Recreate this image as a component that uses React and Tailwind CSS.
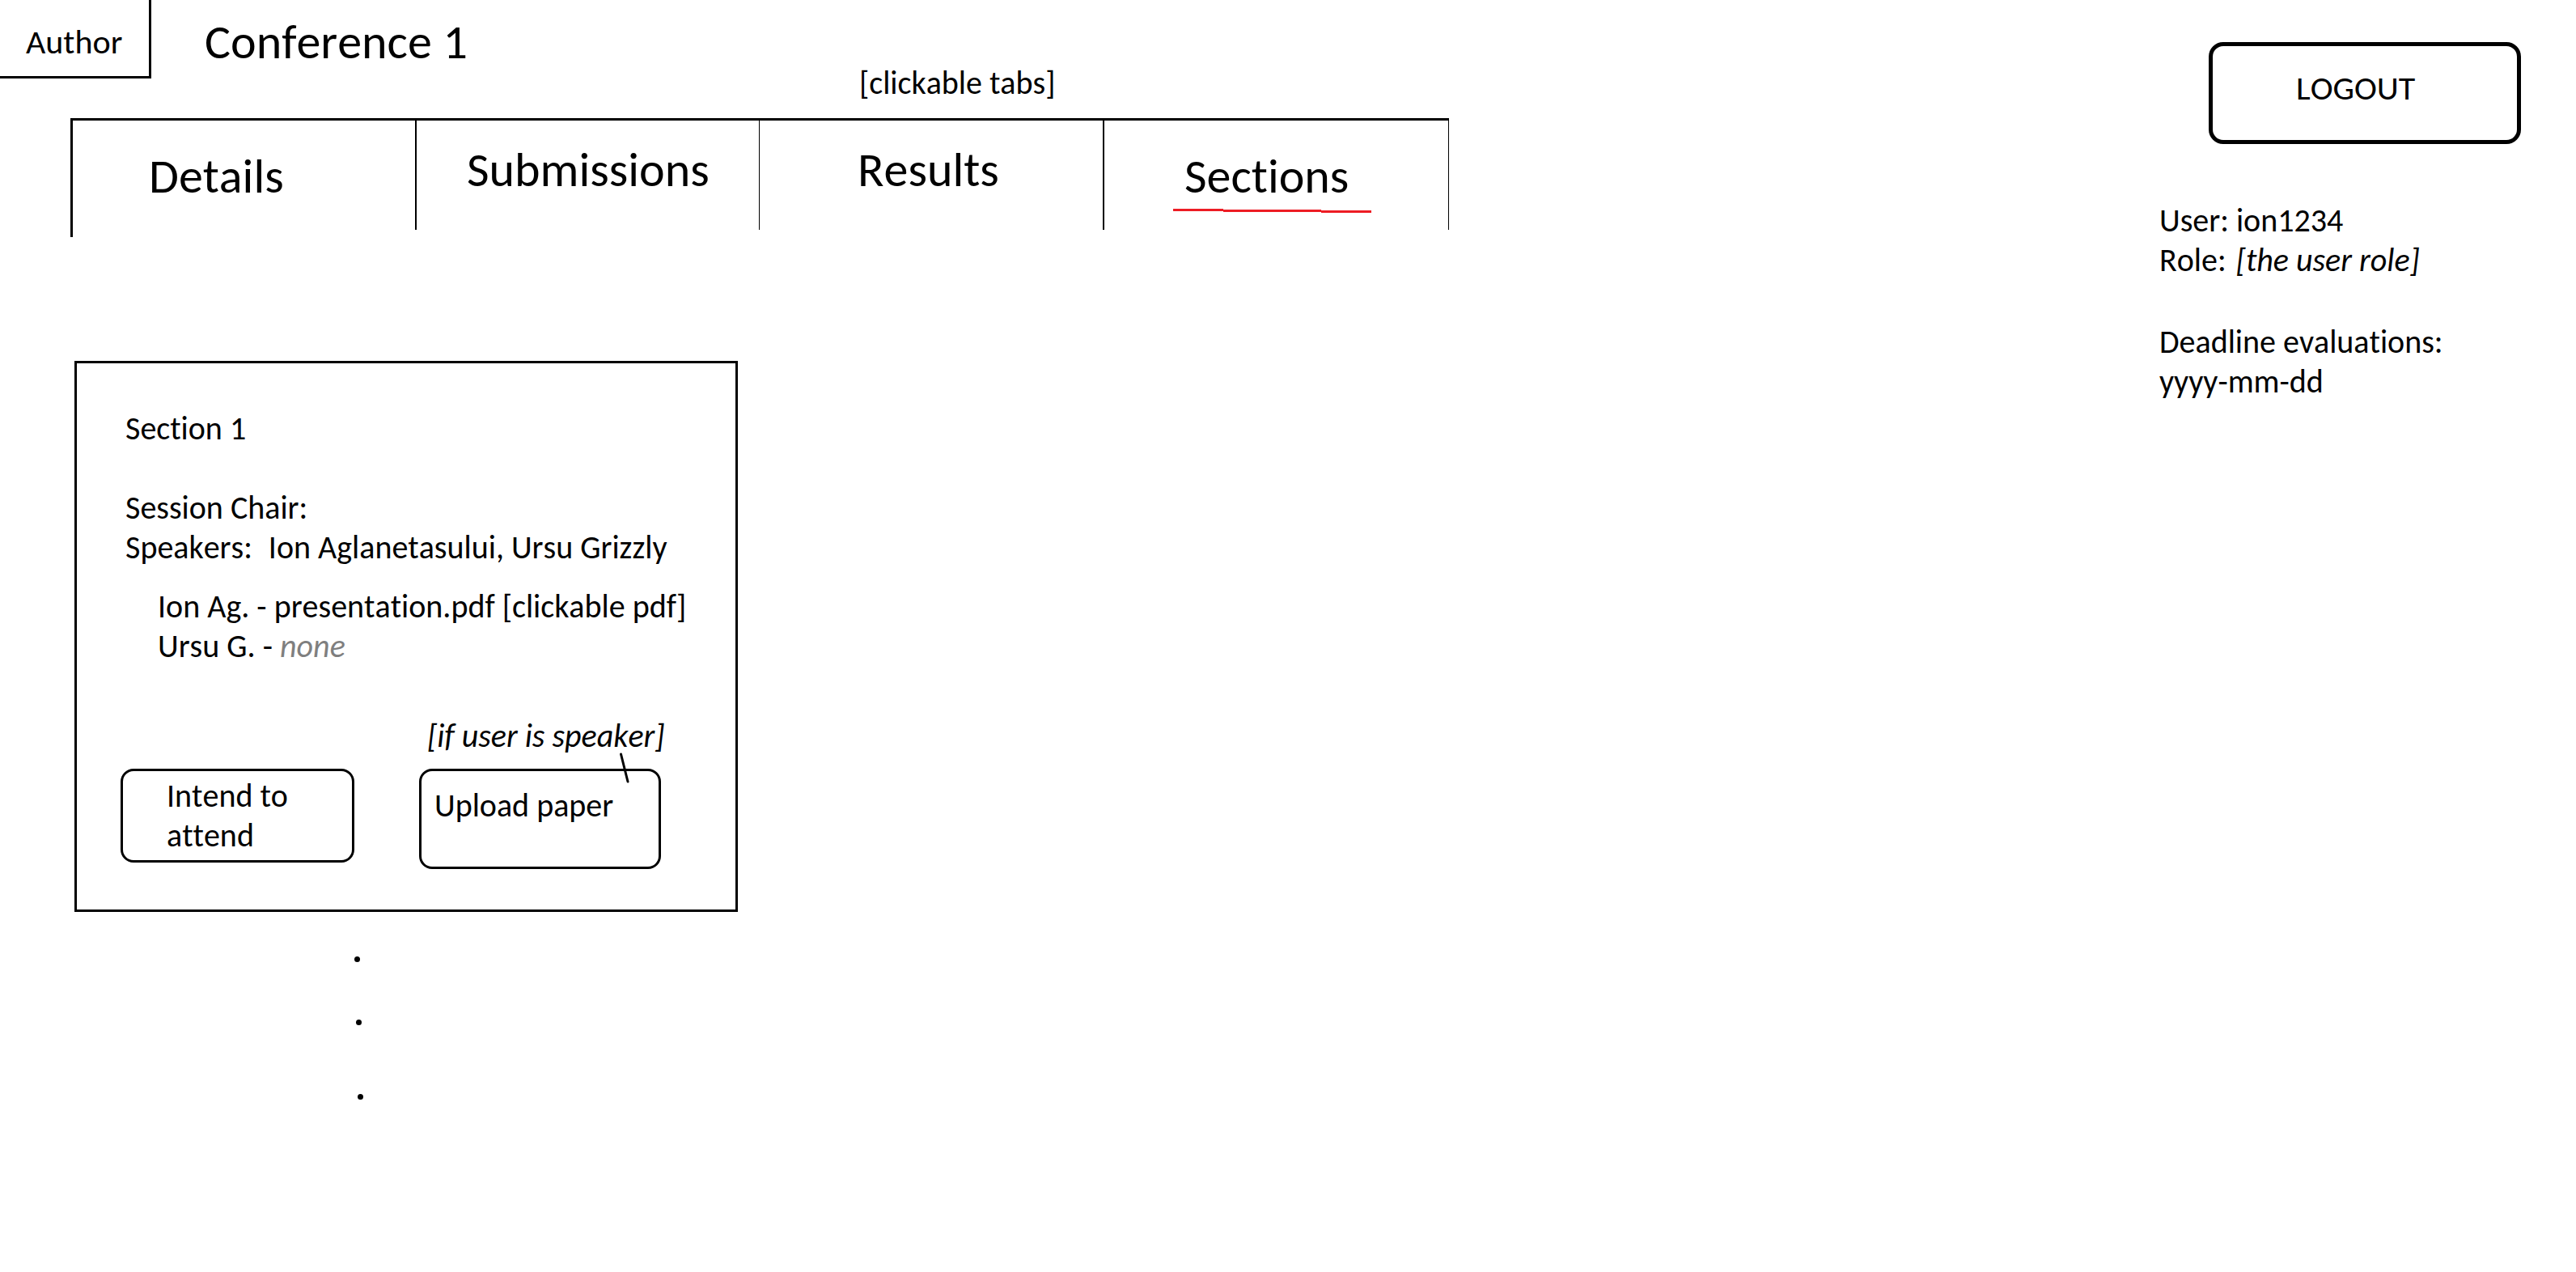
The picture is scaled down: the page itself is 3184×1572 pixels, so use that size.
import React from "react";

function Header() {
  return (
    <header className="grid grid-cols-[187px_875px_auto] items-start">
      <div className="border-b-[3px] border-r-[3px] border-black pt-[26px] pb-[17px] pl-8 text-[42px] leading-[51px]">
        Author
      </div>
      <h1 className="pl-[66px] pt-[15px] text-[60px] leading-[73px]">Conference 1</h1>
      <p className="pt-[78px] leading-[49px]">[clickable tabs]</p>
    </header>
  );
}

function Tabs() {
  return (
    <nav
      aria-label="Conference"
      className="mt-[19px] ml-[87px] grid w-full max-w-[1704px] grid-cols-4 items-start text-[60px] leading-[73px]"
    >
      <button className="flex h-[147px] border-t-[3px] border-l-[3px] border-black pt-8 pl-[94px]">
        Details
      </button>
      <button className="flex h-[138px] border-t-[3px] border-l-2 border-r border-black pt-6 pl-[62px]">
        Submissions
      </button>
      <button className="flex h-[138px] border-t-[3px] border-r-2 border-black pt-6 pl-[121px]">
        Results
      </button>
      <button
        aria-current="page"
        className="flex h-[138px] flex-col items-start border-t-[3px] border-r border-black pt-8 pl-[85px] text-left"
      >
        <span className="pl-[14px]">Sections</span>
        <svg className="mt-1" width="245" height="5" viewBox="0 0 245 5" aria-hidden="true">
          <path
            d="M0 0H62V1H183V2H245V5H183V4H62V3H0Z"
            fill="#ed1c24"
            shapeRendering="crispEdges"
          />
        </svg>
      </button>
    </nav>
  );
}

function SectionCard() {
  return (
    <section className="mt-[153px] ml-[92px] w-full max-w-[820px] border-[3px] border-black pt-14 pb-[50px]">
      <div className="pl-[60px]">
        <h2>Section 1</h2>
        <p className="mt-[49px]">Session Chair:</p>
        <p className="flex gap-5">
          <span>Speakers:</span>
          <span>Ion Aglanetasului, Ursu Grizzly</span>
        </p>
        <ul className="mt-6 pl-10">
          <li>
            Ion Ag. - <a href="#presentation">presentation.pdf</a> [clickable pdf]
          </li>
          <li>
            Ursu G. - <em className="text-[#7f7f7f]">none</em>
          </li>
        </ul>
      </div>
      <div className="mt-[62px] grid grid-cols-[289px_299px] items-start gap-x-20 gap-y-4 pl-[54px]">
        <em className="col-start-2 pl-[10px] whitespace-nowrap">[if user is speaker]</em>
        <button className="flex h-[116px] items-start rounded-2xl border-[3px] border-black pt-[6px] pl-[54px] text-left">
          Intend to attend
        </button>
        <div className="relative">
          <button className="flex h-[124px] w-full items-start rounded-2xl border-[3px] border-black pt-[18px] pl-4 text-left">
            Upload paper
          </button>
          <svg
            className="absolute -top-5 left-[247px]"
            width="14"
            height="40"
            viewBox="0 0 14 40"
            aria-hidden="true"
          >
            <path d="M2.500 2L11 36" stroke="black" strokeWidth="3" strokeLinecap="round" />
          </svg>
        </div>
      </div>
    </section>
  );
}

function MoreDots() {
  return (
    <svg
      className="mt-[55px] ml-[438px]"
      width="12"
      height="178"
      viewBox="0 0 12 178"
      aria-hidden="true"
    >
      <circle cx="3.500" cy="3.500" r="3.500" />
      <circle cx="5.500" cy="81.500" r="3.500" />
      <circle cx="7.500" cy="173.500" r="3.500" />
    </svg>
  );
}

function UserPanel() {
  return (
    <aside className="mr-[68px] flex w-[447px] shrink-0 flex-col pt-[52px]">
      <button className="flex h-[126px] w-[386px] items-start self-end rounded-[18px] border-[5px] border-black pt-[26px] pl-[103px] text-[42px] leading-[51px]">
        LOGOUT
      </button>
      <p className="mt-[70px]">User: ion1234</p>
      <p className="flex gap-3">
        <span>Role:</span>
        <em>[the user role]</em>
      </p>
      <p className="mt-[52px]">Deadline evaluations:</p>
      <p>yyyy-mm-dd</p>
    </aside>
  );
}

export default function App() {
  return (
    <div className="flex min-h-screen items-start justify-between bg-white font-[Carlito,Calibri,Lato,sans-serif] text-[40px] leading-[49px] text-black [font-kerning:none] [font-variant-ligatures:none]">
      <main className="grow">
        <Header />
        <Tabs />
        <SectionCard />
        <MoreDots />
      </main>
      <UserPanel />
    </div>
  );
}
